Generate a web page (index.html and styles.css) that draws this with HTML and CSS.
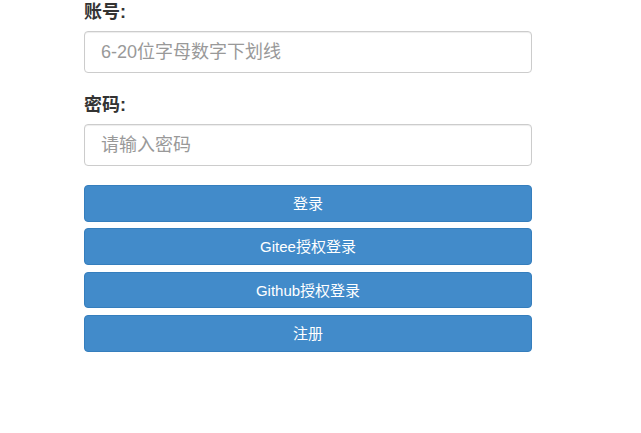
FILE: index.html
```html
<!DOCTYPE html>
<html lang="zh-CN">
<head>
<meta charset="utf-8">
<title>登录</title>
<link rel="stylesheet" href="styles.css">
</head>
<body>
<form class="login-form">
  <div class="form-group">
    <label class="form-label" for="account">账号:</label>
    <input class="form-input" id="account" type="text" placeholder="6-20位字母数字下划线">
  </div>
  <div class="form-group">
    <label class="form-label" for="password">密码:</label>
    <input class="form-input" id="password" type="password" placeholder="请输入密码">
  </div>
  <div class="btn-list">
    <button type="button" class="btn">登录</button>
    <button type="button" class="btn">Gitee授权登录</button>
    <button type="button" class="btn">Github授权登录</button>
    <button type="button" class="btn">注册</button>
  </div>
</form>
</body>
</html>
```
FILE: styles.css
```css
html, body {
  margin: 0;
  padding: 0;
  background: #fff;
}
body {
  font-family: "Liberation Sans", "Noto Sans CJK SC", sans-serif;
  color: #333;
}
.login-form {
  width: 448px;
  margin-left: 84px;
  display: flex;
  flex-direction: column;
}
.form-group {
  display: flex;
  flex-direction: column;
  margin-bottom: 20px;
}
.form-group + .form-group {
  margin-bottom: 19px;
}
.form-label {
  font-size: 18px;
  font-weight: bold;
  line-height: 25px;
  height: 25px;
  margin-bottom: 6px;
  color: #333;
}
.form-input {
  box-sizing: border-box;
  height: 42px;
  width: 100%;
  margin: 0;
  padding: 0 16px;
  font-family: "Liberation Sans", "Noto Sans CJK SC", sans-serif;
  font-size: 18px;
  color: #555;
  border: 1px solid #ccc;
  border-radius: 4px;
  background: #fff;
  box-shadow: inset 0 1px 1px rgba(0,0,0,0.075);
  outline: none;
}
.form-input::placeholder {
  color: #999;
}
.btn-list {
  display: flex;
  flex-direction: column;
  gap: 6.8px;
}
.btn {
  box-sizing: border-box;
  height: 36.6px;
  width: 100%;
  margin: 0;
  padding: 0 12px;
  font-family: "Liberation Sans", "Noto Sans CJK SC", sans-serif;
  font-size: 15px;
  line-height: 1;
  color: #fff;
  background: #428bca;
  border: 1px solid #357ebd;
  border-radius: 4px;
  cursor: pointer;
}
```
